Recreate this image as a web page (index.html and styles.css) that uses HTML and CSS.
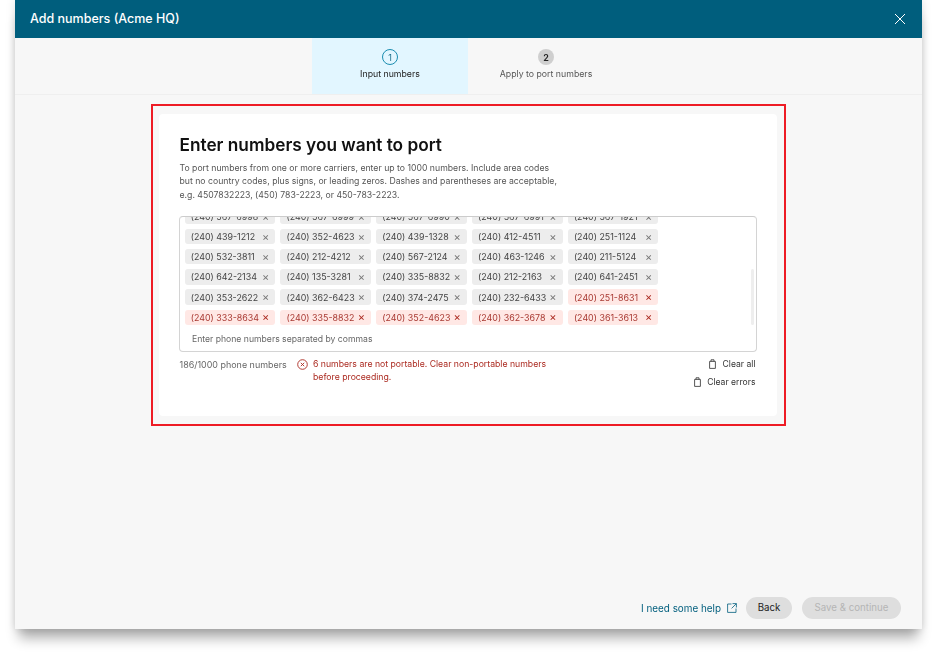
FILE: index.html
```html
<!DOCTYPE html>
<html lang="en">
<head>
<meta charset="utf-8">
<title>Add numbers (Acme HQ)</title>
<link rel="stylesheet" href="styles.css">
</head>
<body>
<div class="modal">
  <header class="modal-header">
    <h1 class="modal-title">Add numbers (Acme HQ)</h1>
    <svg class="close-icon" width="12" height="12" viewBox="0 0 12 12"><path d="M1 1l10 10M11 1L1 11" stroke="#fff" stroke-width="1" fill="none"/></svg>
  </header>
  <nav class="stepper">
    <div class="step step-active"><span class="step-num">1</span><span class="step-label">Input numbers</span></div>
    <div class="step"><span class="step-num">2</span><span class="step-label">Apply to port numbers</span></div>
  </nav>
  <main class="modal-body">
    <section class="highlight">
      <div class="card">
        <h2 class="card-title">Enter numbers you want to port</h2>
        <p class="card-desc">To port numbers from one or more carriers, enter up to 1000 numbers. Include area codes<br>but no country codes, plus signs, or leading zeros. Dashes and parentheses are acceptable,<br>e.g. 4507832223, (450) 783-2223, or 450-783-2223.</p>
        <div class="number-box">
          <div class="tag-viewport">
            <div class="tag-grid">
              <span class="tag">(240) 567-6998<i>×</i></span><span class="tag">(240) 567-6999<i>×</i></span><span class="tag">(240) 567-6990<i>×</i></span><span class="tag">(240) 567-6991<i>×</i></span><span class="tag">(240) 567-1921<i>×</i></span>
              <span class="tag">(240) 439-1212<i>×</i></span><span class="tag">(240) 352-4623<i>×</i></span><span class="tag">(240) 439-1328<i>×</i></span><span class="tag">(240) 412-4511<i>×</i></span><span class="tag">(240) 251-1124<i>×</i></span>
              <span class="tag">(240) 532-3811<i>×</i></span><span class="tag">(240) 212-4212<i>×</i></span><span class="tag">(240) 567-2124<i>×</i></span><span class="tag">(240) 463-1246<i>×</i></span><span class="tag">(240) 211-5124<i>×</i></span>
              <span class="tag">(240) 642-2134<i>×</i></span><span class="tag">(240) 135-3281<i>×</i></span><span class="tag">(240) 335-8832<i>×</i></span><span class="tag">(240) 212-2163<i>×</i></span><span class="tag">(240) 641-2451<i>×</i></span>
              <span class="tag">(240) 353-2622<i>×</i></span><span class="tag">(240) 362-6423<i>×</i></span><span class="tag">(240) 374-2475<i>×</i></span><span class="tag">(240) 232-6433<i>×</i></span><span class="tag tag-error">(240) 251-8631<i>×</i></span>
              <span class="tag tag-error">(240) 333-8634<i>×</i></span><span class="tag tag-error">(240) 335-8832<i>×</i></span><span class="tag tag-error">(240) 352-4623<i>×</i></span><span class="tag tag-error">(240) 362-3678<i>×</i></span><span class="tag tag-error">(240) 361-3613<i>×</i></span>
            </div>
            <div class="scrollbar"></div>
          </div>
          <div class="placeholder">Enter phone numbers separated by commas</div>
        </div>
        <div class="status-row">
          <span class="count">186/1000 phone numbers</span>
          <div class="error-msg">
            <svg class="error-icon" width="11" height="11" viewBox="0 0 11 11"><circle cx="5.5" cy="5.5" r="4.8" fill="none" stroke="#ab2a20" stroke-width=".9"/><path d="M3.8 3.8l3.4 3.4M7.2 3.8L3.8 7.2" stroke="#ab2a20" stroke-width=".9"/></svg>
            <span>6 numbers are not portable. Clear non-portable numbers<br>before proceeding.</span>
          </div>
          <div class="actions">
            <span class="action"><svg width="7" height="10" viewBox="0 0 7 10"><path d="M.6 2.4h5.8V9.4H.6zM2 2.4V.8h3v1.6" fill="none" stroke="#444" stroke-width=".9"/></svg>Clear all</span>
            <span class="action"><svg width="7" height="10" viewBox="0 0 7 10"><path d="M.6 2.4h5.8V9.4H.6zM2 2.4V.8h3v1.6" fill="none" stroke="#444" stroke-width=".9"/></svg>Clear errors</span>
          </div>
        </div>
      </div>
    </section>
  </main>
  <footer class="modal-footer">
    <a class="help-link">I need some help<svg width="10" height="10" viewBox="0 0 10 10"><path d="M4.5 1H.6v8.4H9V5.5M5.5.6h3.9v3.9M9.3.7L4.6 5.4" fill="none" stroke="#005e7d" stroke-width=".8"/></svg></a>
    <button class="btn btn-back">Back</button>
    <button class="btn btn-save">Save &amp; continue</button>
  </footer>
</div>
</body>
</html>
```
FILE: styles.css
```css
* { box-sizing: border-box; }
html, body { margin: 0; height: 100%; background: #fff; }
body { padding: 0 14px 29px 15px; font-family: Inter, "Liberation Sans", sans-serif; overflow: hidden; }
.modal {
  height: 629px; background: #f7f7f7; display: flex; flex-direction: column;
  box-shadow: 0 13px 12px -4px rgba(0,0,0,.32), 0 0 9px rgba(0,0,0,.13);
  filter: blur(.3px);
}
.modal-header {
  height: 38px; flex: none; background: #005e7d; color: #fff;
  display: flex; align-items: center; justify-content: space-between; padding: 0 16px 1px 15px;
}
.modal-title { margin: 0; font-size: 12.5px; font-weight: 500; }
.stepper {
  height: 57px; flex: none; display: flex; justify-content: center;
  border-bottom: 1px solid #efefef; padding-right: 1px;
}
.step { width: 156px; height: 56px; display: flex; flex-direction: column; align-items: center; padding-top: 11px; color: #555; font-size: 8.75px; }
.step-active { background: #e2f6ff; color: #222; }
.step-num { width: 16px; height: 16px; border-radius: 50%; background: #cfcfcf; color: #222; display: flex; align-items: center; justify-content: center; font-size: 9px; font-weight: 600; margin-bottom: 4px; }
.step-active .step-num { background: none; border: 1px solid #1b8db0; font-weight: 400; color: #1b6f8a; }
.modal-body { flex: 1; display: flex; justify-content: center; padding-top: 9px; }
.highlight { width: 635px; height: 322px; border: 2px solid #ee1c25; padding: 8px 7px 8px 6px; }
.card { height: 302px; background: #fff; border-radius: 4px; padding: 21px 20px 0 20px; }
.card-title { margin: 0; padding-left: .5px; font-size: 17.25px; line-height: 20px; font-weight: 600; color: #111; }
.card-desc { margin: 7px 0 14px; padding-left: .5px; font-size: 8.7px; line-height: 13.3px; color: #555; }
.number-box { height: 136px; border: 1px solid #d4d4d4; border-top-color: #ccc; border-radius: 4px; }
.tag-viewport { height: 110px; overflow: hidden; position: relative; padding-left: 4.7px; }
.tag-grid { display: grid; grid-template-columns: repeat(5, 90.5px); gap: 4.85px 5.3px; margin-top: -8px; }
.tag { height: 15.3px; background: #ededed; border-radius: 3px; color: #444; font-size: 8.9px; display: flex; align-items: center; justify-content: space-between; padding: 0 6px; white-space: nowrap; }
.tag i { font-style: normal; font-size: 11px; color: #777; }
.tag-error { background: #ffe8e5; color: #a93a33; }
.tag-error i { color: #ab2a20; }
.scrollbar { position: absolute; right: 2px; top: 52px; width: 3.5px; height: 56px; background: #eee; border-radius: 2px; }
.placeholder { padding: 7px 0 0 12px; font-size: 8.65px; color: #666; }
.status-row { display: flex; padding: 6px 0 0 .5px; width: 578px; font-size: 8.7px; }
.count { width: 117px; color: #666; line-height: 13px; font-size: 8.95px; }
.error-msg { display: flex; gap: 5.5px; color: #ab2a20; line-height: 13.3px; }
.error-icon { margin-top: 1px; flex: none; }
.actions { margin-left: auto; display: flex; flex-direction: column; align-items: flex-end; gap: 5px; padding-right: 1.5px; color: #333; line-height: 13px; font-size: 8.6px; }
.action { display: flex; align-items: center; gap: 6.5px; }
.modal-footer { height: 40px; flex: none; display: flex; align-items: flex-start; justify-content: flex-end; padding: 7.5px 21px 0 0; }
.help-link { display: flex; align-items: center; gap: 6px; color: #005e7d; font-size: 9.9px; height: 22px; margin-right: 9px; }
.btn { height: 22px; border: 0; border-radius: 11px; font: inherit; font-size: 9.7px; padding: 0; }
.btn-back { width: 46px; background: #dedede; color: #222; margin-right: 10px; }
.btn-save { width: 99px; background: #dedede; color: #b5b5b5; }
```
